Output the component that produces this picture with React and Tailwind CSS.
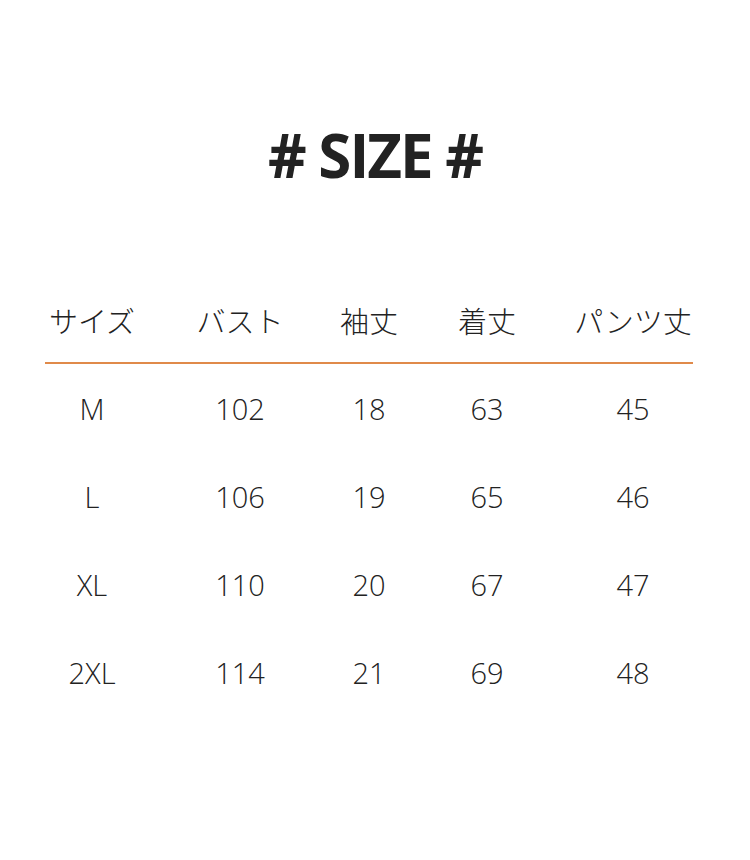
import React from 'react';

const headers = ['サイズ', 'バスト', '袖丈', '着丈', 'パンツ丈'];
const rows = [
  ['M', '102', '18', '63', '45'],
  ['L', '106', '19', '65', '46'],
  ['XL', '110', '20', '67', '47'],
  ['2XL', '114', '21', '69', '48'],
];

// column tracks sized so each cell centre sits where the reference has it
const cols = 'grid grid-cols-[94px_202px_56px_180px_112px] justify-items-center';

export default function App() {
  return (
    <div className="w-[750px] h-[860px] bg-white text-[#222] font-['Open_Sans',sans-serif]">
      <div className="pt-[119px] h-[196px] flex justify-center">
        <h1 className="text-[60px] leading-[72px] font-bold tracking-[-2px]">{'# SIZE #'}</h1>
      </div>

      <div className="mx-[45px] w-[648px]">
        <div className={`${cols} mt-[103px] h-[42px] items-center font-['Noto_Sans_CJK_JP',sans-serif] font-light text-[29px]`}>
          {headers.map((h) => (
            <span key={h} className="whitespace-nowrap">{h}</span>
          ))}
        </div>
        <div className="mt-[21px] h-[2px] bg-[#e08a4a]" />

        <div className="pt-[1px]">
          {rows.map((r) => (
            <div key={r[0]} className={`${cols} h-[88px] items-center text-[29px] font-light`}>
              {r.map((c, i) => (
                <span key={i} className="whitespace-nowrap">{c}</span>
              ))}
            </div>
          ))}
        </div>
      </div>
    </div>
  );
}
